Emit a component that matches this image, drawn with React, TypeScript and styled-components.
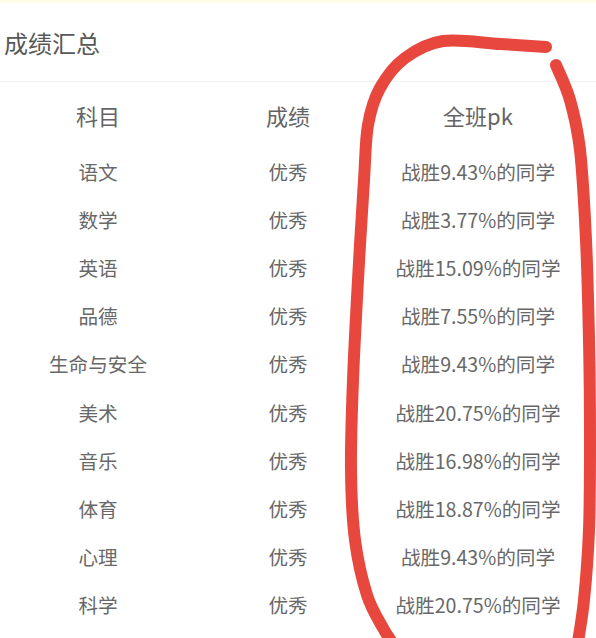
import React from "react";
import styled, { createGlobalStyle } from "styled-components";

const GlobalStyle = createGlobalStyle`
  html, body {
    margin: 0;
    padding: 0;
    background: #ffffff;
  }
  body {
    font-family: "Noto Sans CJK SC", "Noto Sans", sans-serif;
  }
`;

const Page = styled.div`
  position: relative;
  width: 596px;
  height: 638px;
  overflow: hidden;
  background: #ffffff;
`;

const TopStrip = styled.div`
  height: 4px;
  background: linear-gradient(#fdfbe2, #fffef6);
`;

const TitleBar = styled.div`
  height: 77px;
  display: flex;
  align-items: center;
  padding-left: 4px;
  border-bottom: 1px solid #efefef;
  font-size: 24px;
  color: #575757;
`;

const Table = styled.div`
  width: 570px;
  margin-left: 3px;
  display: grid;
  grid-template-columns: repeat(3, 1fr);
`;

const HeadCell = styled.div`
  height: 65px;
  display: flex;
  align-items: center;
  justify-content: center;
  font-size: 22px;
  color: #646464;
`;

const Cell = styled.div`
  height: 48.2px;
  display: flex;
  align-items: center;
  justify-content: center;
  font-size: 19.6px;
  color: #686868;
  white-space: nowrap;
`;

const Overlay = styled.svg`
  position: absolute;
  left: 0;
  top: 0;
  pointer-events: none;
`;

type Row = { subject: string; grade: string; pk: string };

const rows: Row[] = [
  { subject: "语文", grade: "优秀", pk: "战胜9.43%的同学" },
  { subject: "数学", grade: "优秀", pk: "战胜3.77%的同学" },
  { subject: "英语", grade: "优秀", pk: "战胜15.09%的同学" },
  { subject: "品德", grade: "优秀", pk: "战胜7.55%的同学" },
  { subject: "生命与安全", grade: "优秀", pk: "战胜9.43%的同学" },
  { subject: "美术", grade: "优秀", pk: "战胜20.75%的同学" },
  { subject: "音乐", grade: "优秀", pk: "战胜16.98%的同学" },
  { subject: "体育", grade: "优秀", pk: "战胜18.87%的同学" },
  { subject: "心理", grade: "优秀", pk: "战胜9.43%的同学" },
  { subject: "科学", grade: "优秀", pk: "战胜20.75%的同学" },
];

function smooth(pts: number[][]): string {
  let d = `M${pts[0][0]},${pts[0][1]}`;
  for (let i = 0; i < pts.length - 1; i++) {
    const p0 = pts[i - 1] || pts[i];
    const p1 = pts[i];
    const p2 = pts[i + 1];
    const p3 = pts[i + 2] || p2;
    const c1x = p1[0] + (p2[0] - p0[0]) / 6;
    const c1y = p1[1] + (p2[1] - p0[1]) / 6;
    const c2x = p2[0] - (p3[0] - p1[0]) / 6;
    const c2y = p2[1] - (p3[1] - p1[1]) / 6;
    d += ` C${c1x.toFixed(1)},${c1y.toFixed(1)} ${c2x.toFixed(1)},${c2y.toFixed(1)} ${p2[0]},${p2[1]}`;
  }
  return d;
}

const leftStroke = smooth([
  [546, 47],
  [500, 44],
  [443, 41],
  [405, 58],
  [380, 88],
  [368, 125],
  [364, 180],
  [358, 280],
  [353, 380],
  [351, 470],
  [355, 540],
  [367, 595],
  [383, 628],
  [396, 648],
]);

const rightStroke = smooth([
  [556, 65],
  [570, 100],
  [580, 150],
  [586, 240],
  [589, 340],
  [590, 440],
  [589, 530],
  [584, 600],
  [577, 648],
]);

export default function App() {
  return (
    <>
      <GlobalStyle />
      <Page>
        <TopStrip />
        <TitleBar>成绩汇总</TitleBar>
        <Table>
          <HeadCell>科目</HeadCell>
          <HeadCell>成绩</HeadCell>
          <HeadCell>全班pk</HeadCell>
          {rows.map((r) => (
            <React.Fragment key={r.subject + r.pk}>
              <Cell>{r.subject}</Cell>
              <Cell>{r.grade}</Cell>
              <Cell>{r.pk}</Cell>
            </React.Fragment>
          ))}
        </Table>
        <Overlay width="596" height="638" viewBox="0 0 596 638">
          <g fill="none" stroke="#e8473e" strokeWidth="12" strokeLinecap="round" strokeLinejoin="round">
            <path d={leftStroke} />
            <path d={rightStroke} />
          </g>
        </Overlay>
      </Page>
    </>
  );
}
